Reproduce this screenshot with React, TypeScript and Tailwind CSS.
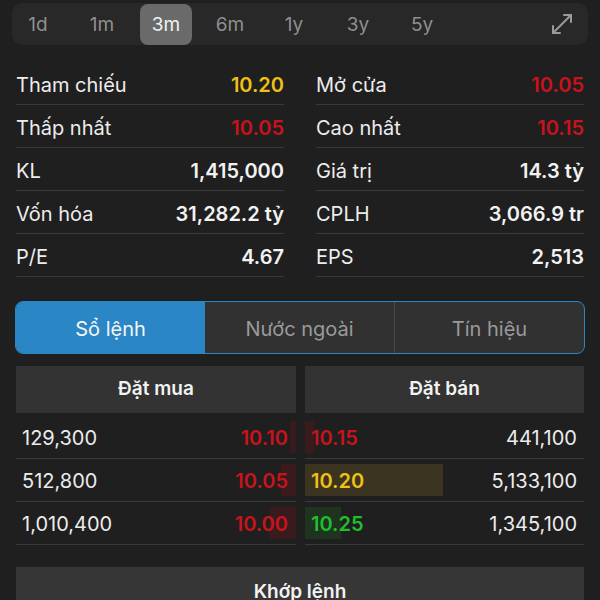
import React from "react";

const periods = ["1d", "1m", "3m", "6m", "1y", "3y", "5y"];

type Stat = { label: string; value: string; color: string };
const left: Stat[] = [
  { label: "Tham chiếu", value: "10.20", color: "text-[#f0c015]" },
  { label: "Thấp nhất", value: "10.05", color: "text-[#c8131c]" },
  { label: "KL", value: "1,415,000", color: "text-[#f2f2f2]" },
  { label: "Vốn hóa", value: "31,282.2 tỷ", color: "text-[#f2f2f2]" },
  { label: "P/E", value: "4.67", color: "text-[#f2f2f2]" },
];
const right: Stat[] = [
  { label: "Mở cửa", value: "10.05", color: "text-[#c8131c]" },
  { label: "Cao nhất", value: "10.15", color: "text-[#c8131c]" },
  { label: "Giá trị", value: "14.3 tỷ", color: "text-[#f2f2f2]" },
  { label: "CPLH", value: "3,066.9 tr", color: "text-[#f2f2f2]" },
  { label: "EPS", value: "2,513", color: "text-[#f2f2f2]" },
];

const buys = [
  { qty: "129,300", price: "10.10", bar: 6 },
  { qty: "512,800", price: "10.05", bar: 15 },
  { qty: "1,010,400", price: "10.00", bar: 26 },
];
const sells = [
  { qty: "441,100", price: "10.15", color: "text-[#c8131c]", bg: "bg-[#3a1b1d]", bar: 9 },
  { qty: "5,133,100", price: "10.20", color: "text-[#f0c015]", bg: "bg-[#3a3420]", bar: 138 },
  { qty: "1,345,100", price: "10.25", color: "text-[#1fbf2a]", bg: "bg-[#1f3321]", bar: 36 },
];

function StatCell({ s }: { s: Stat }) {
  return (
    <div className="flex h-[43px] items-center justify-between border-b border-[#3a3a3a] pt-[3px]">
      <span className="text-[20px] text-[#ededed]">{s.label}</span>
      <span className={`text-[20px] font-semibold ${s.color}`}>{s.value}</span>
    </div>
  );
}

export default function App() {
  return (
    <div
      className="h-[600px] w-[600px] overflow-hidden bg-[#1f1f1f]"
      style={{ fontFamily: "Inter, 'Noto Sans', sans-serif" }}
    >
      {/* period bar */}
      <div className="mx-[12px] mt-[3px] flex h-[42px] items-center rounded-[10px] bg-[#282828] pr-[14px]">
        <div className="flex gap-[12px]">
          {periods.map((p) => (
            <div
              key={p}
              className={`flex h-[41px] w-[52px] items-center justify-center rounded-[8px] pt-[2px] text-[19px] ${
                p === "3m" ? "bg-[#6a6a6a] text-[#f2f2f2]" : "text-[#8f8f8f]"
              }`}
            >
              {p}
            </div>
          ))}
        </div>
        <div className="ml-auto text-[#9a9a9a]">
          <svg width="24" height="24" viewBox="0 0 24 24" fill="none" stroke="currentColor" strokeWidth="2" strokeLinecap="round" strokeLinejoin="round">
            <path d="M10 21H3v-7" />
            <path d="M14 3h7v7" />
            <path d="M21 3 3 21" />
          </svg>
        </div>
      </div>

      {/* stats */}
      <div className="mt-[17px] grid grid-cols-2 gap-x-8 px-4">
        <div>
          {left.map((s) => (
            <StatCell key={s.label} s={s} />
          ))}
        </div>
        <div>
          {right.map((s) => (
            <StatCell key={s.label} s={s} />
          ))}
        </div>
      </div>

      {/* tabs */}
      <div className="mx-[15px] mt-[24px] flex h-[53px] overflow-hidden rounded-[8px] border-[1.5px] border-[#2b86c5] bg-[#313131] text-[20px]">
        <div className="flex w-[189px] items-center justify-center bg-[#2b86c5] pt-[2px] text-[#f5f5f5]">Sổ lệnh</div>
        <div className="flex flex-1 items-center justify-center border-r border-[#4a4a4a] pt-[2px] text-[#9a9a9a]">Nước ngoài</div>
        <div className="flex flex-1 items-center justify-center pt-[2px] text-[#9a9a9a]">Tín hiệu</div>
      </div>

      {/* order book */}
      <div className="mt-[12px] flex gap-[9px] pl-[16px] pr-[16px]">
        <div className="w-[280px]">
          <div className="mb-[3px] flex h-[47px] items-center justify-center bg-[#333333] text-[19px] font-semibold text-[#f2f2f2]">
            Đặt mua
          </div>
          {buys.map((b) => (
            <div key={b.qty} className="relative flex h-[43px] items-center justify-between border-b border-[#3a3a3a] pl-[6px] pr-[8px] pt-[2px]">
              <div className="absolute bottom-[5px] right-0 top-[5px] bg-[#3a1b1d]" style={{ width: b.bar }} />
              <span className="relative text-[20px] text-[#ececec]">{b.qty}</span>
              <span className="relative text-[20px] font-semibold text-[#c8131c]">{b.price}</span>
            </div>
          ))}
        </div>
        <div className="flex-1">
          <div className="mb-[3px] flex h-[47px] items-center justify-center bg-[#333333] text-[19px] font-semibold text-[#f2f2f2]">
            Đặt bán
          </div>
          {sells.map((s) => (
            <div key={s.qty} className="relative flex h-[43px] items-center justify-between border-b border-[#3a3a3a] pl-[6px] pr-[7px] pt-[2px]">
              <div className={`absolute bottom-[5px] left-0 top-[5px] ${s.bg}`} style={{ width: s.bar }} />
              <span className={`relative text-[20px] font-semibold ${s.color}`}>{s.price}</span>
              <span className="relative text-[20px] text-[#ececec]">{s.qty}</span>
            </div>
          ))}
        </div>
      </div>

      {/* matched */}
      <div className="mx-[16px] mt-[22px] flex h-[50px] items-center justify-center bg-[#363636] text-[19px] font-semibold text-[#f2f2f2]">
        Khớp lệnh
      </div>
    </div>
  );
}
